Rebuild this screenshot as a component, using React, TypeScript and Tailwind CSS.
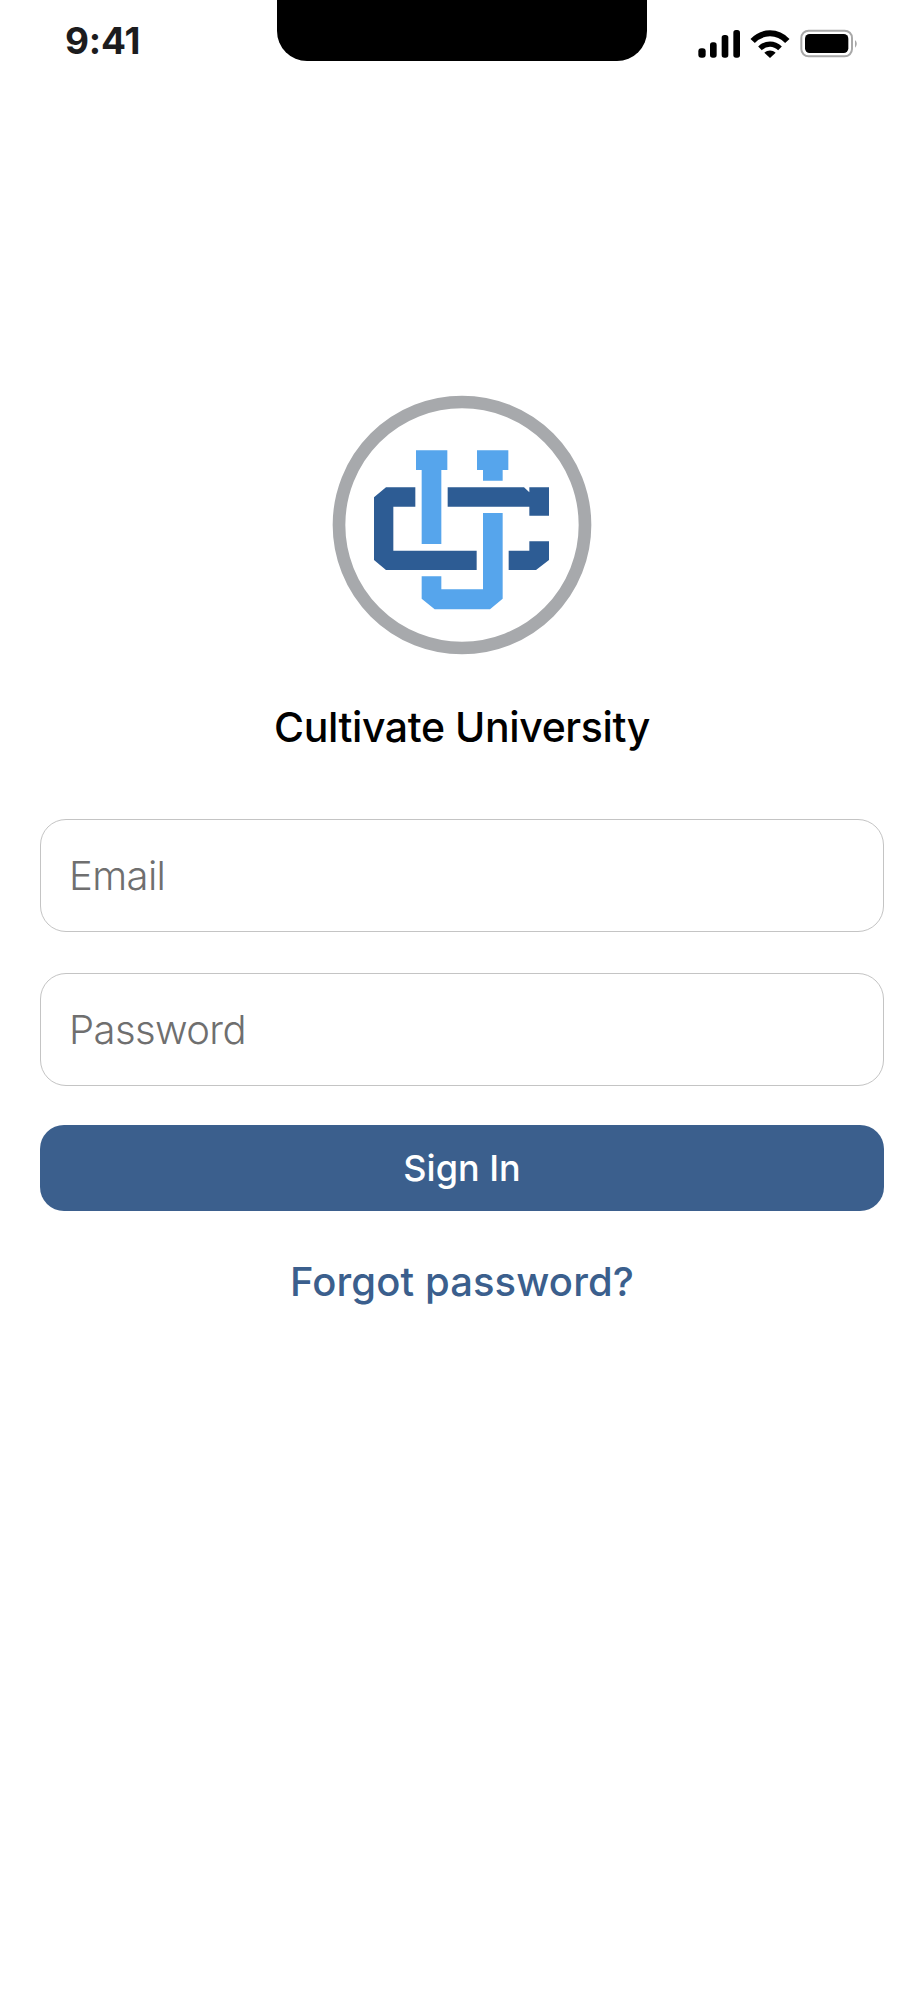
import React from 'react';

const StatusIcons = () => (
  <svg width="200" height="60" viewBox="0 0 600 180" className="block">
    <rect x="85" y="100" width="22" height="28" rx="9" fill="#000" />
    <rect x="120" y="82" width="20" height="46" rx="8" fill="#000" />
    <rect x="155" y="60" width="20" height="68" rx="8" fill="#000" />
    <rect x="190" y="45" width="20" height="83" rx="8" fill="#000" />
    <path d="M248 78 C277 47 323 47 352 78" fill="none" stroke="#000" strokeWidth="18" strokeLinecap="butt" />
    <path d="M270 100 C288 83 312 83 330 100" fill="none" stroke="#000" strokeWidth="16" strokeLinecap="butt" />
    <path d="M283 113 C294 104 306 104 317 113 L300 129 Z" fill="#000" />
    <rect x="394" y="47" width="152" height="77" rx="22" fill="none" stroke="#a8a8a8" strokeWidth="6" />
    <rect x="405" y="57" width="130" height="57" rx="14" fill="#000" />
    <path d="M555 76 C562 80 562 92 555 98 Z" fill="#a8a8a8" />
  </svg>
);

const Logo = () => (
  <svg width="284" height="284" viewBox="0 0 852 852" className="block">
    <circle cx="426" cy="435" r="369" fill="none" stroke="#a7a9ac" strokeWidth="38" />
    <g fill="#2d5c94">
      <polygon points="198,322 286,322 286,380 220,380 220,512 470,512 470,570 198,570 162,540 162,352" />
      <polygon points="383,322 612,322 628,337 628,322 687,322 687,407 628,407 628,380 383,380" />
      <polygon points="566,512 628,512 628,484 687,484 687,540 648,570 566,570" />
    </g>
    <g fill="#56a5ec">
      <polygon points="288,211 382,211 382,270 364,270 364,492 305,492 305,270 288,270" />
      <polygon points="471,211 565,211 565,270 548,270 548,302 489,302 489,270 471,270" />
      <polygon points="489,399 548,399 548,656 510,688 344,688 305,656 305,589 364,589 364,628 489,628" />
    </g>
  </svg>
);

const Field = ({ label, className }: { label: string; className: string }) => (
  <div className={`h-[113px] rounded-[26px] border border-[#c4c4c4] bg-white pl-[28px] flex items-center text-[40px] font-light tracking-[-0.6px] text-[#6f6f6f] ${className}`}>
    {label}
  </div>
);

export default function App() {
  return (
    <div className="w-[924px] h-[2000px] bg-white font-['Inter','Liberation_Sans',sans-serif]">
      <div className="flex h-[61px]">
        <div className="w-[277px] pl-[65px] pt-[18px] text-[37px] leading-[46px] font-bold tracking-[-0.2px] text-[#1c1c1e]">
          9:41
        </div>
        <div className="w-[370px] h-[61px] bg-black rounded-b-[30px]" />
        <div className="pl-[23px] pt-[15px]">
          <StatusIcons />
        </div>
      </div>

      <div className="flex justify-center mt-[319px]">
        <Logo />
      </div>
      <div className="mt-[38px] text-center text-[41px] leading-[50px] font-medium tracking-[-0.4px] text-black">Cultivate University</div>

      <div className="px-[40px] mt-[67px]">
        <Field label="Email" className="" />
        <Field label="Password" className="mt-[41px]" />
        <div className="mt-[39px] h-[86px] rounded-[24px] bg-[#3b5f8d] flex items-center justify-center text-[36px] font-medium text-white">
          Sign In
        </div>
        <div className="mt-[46px] text-center text-[40px] leading-[50px] font-medium tracking-[0.1px] text-[#3b5f8d]">Forgot password?</div>
      </div>
    </div>
  );
}
